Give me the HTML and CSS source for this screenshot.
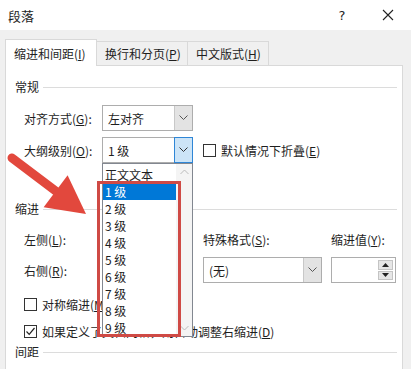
FILE: index.html
```html
<!DOCTYPE html>
<html lang="zh-CN">
<head>
  <meta charset="UTF-8">
  <title>段落</title>
  <link rel="stylesheet" href="styles.css">
</head>
<body>

  <div class="titlebar">
    <span class="title">段落</span>
    <span class="tb-btn">?</span>
    <span class="tb-btn close">
      <svg width="12" height="12" viewBox="0 0 12 12"><path d="M1 1 L11 11 M11 1 L1 11" stroke="#222" stroke-width="1.1"/></svg>
    </span>
  </div>

  <div class="main">
    <div class="tabs">
      <div class="tab active">缩进和间距(<u>I</u>)</div>
      <div class="tab">换行和分页(<u>P</u>)</div>
      <div class="tab">中文版式(<u>H</u>)</div>
    </div>

    <div class="panel">
      <!-- 常规 -->
      <div class="heading">常规</div>
      <div class="row first">
        <span class="label">对齐方式(<u>G</u>):</span>
        <div class="combo w91">
          <span class="combo-text">左对齐</span>
          <span class="combo-btn"><svg width="9" height="6" viewBox="0 0 9 6"><path d="M0.5 0.5 L4.5 4.5 L8.5 0.5" fill="none" stroke="#555"/></svg></span>
        </div>
      </div>
      <div class="row">
        <span class="label">大纲级别(<u>O</u>):</span>
        <div class="combo w91">
          <span class="combo-text">1 级</span>
          <span class="combo-btn hot"><svg width="9" height="6" viewBox="0 0 9 6"><path d="M0.5 0.5 L4.5 4.5 L8.5 0.5" fill="none" stroke="#333"/></svg></span>
        </div>
        <label class="check gap"><span class="box"></span>默认情况下折叠(<u>E</u>)</label>
      </div>

      <!-- 缩进 -->
      <div class="heading indent-head">缩进</div>
      <div class="indent-grid">
        <span class="label">左侧(<u>L</u>):</span>
        <span></span>
        <span class="label">特殊格式(<u>S</u>):</span>
        <span class="label">缩进值(<u>Y</u>):</span>

        <span class="label">右侧(<u>R</u>):</span>
        <span></span>
        <div class="combo w119">
          <span class="combo-text">(无)</span>
          <span class="combo-btn"><svg width="9" height="6" viewBox="0 0 9 6"><path d="M0.5 0.5 L4.5 4.5 L8.5 0.5" fill="none" stroke="#555"/></svg></span>
        </div>
        <div class="spin">
          <span class="spin-text"></span>
          <span class="spin-btns">
            <span class="spin-up"><svg width="7" height="4" viewBox="0 0 7 4"><path d="M0 4 L3.5 0 L7 4 Z" fill="#222"/></svg></span>
            <span class="spin-down"><svg width="7" height="4" viewBox="0 0 7 4"><path d="M0 0 L3.5 4 L7 0 Z" fill="#222"/></svg></span>
          </span>
        </div>
      </div>

      <label class="check row-check first-check"><span class="box"></span>对称缩进(<u>M</u>)</label>
      <label class="check row-check"><span class="box checked"><svg width="11" height="11" viewBox="0 0 11 11"><path d="M1.5 5.5 L4.2 8.3 L9.5 2" fill="none" stroke="#222" stroke-width="1.2"/></svg></span>如果定义了文档网格，则自动调整右缩进(<u>D</u>)</label>

      <!-- 间距 -->
      <div class="heading spacing-head">间距</div>
    </div>
  </div>

  <!-- open dropdown list -->
  <div class="droplist">
    <div class="items">
      <div class="item">正文文本</div>
      <div class="item selected">1 级</div>
      <div class="item">2 级</div>
      <div class="item">3 级</div>
      <div class="item">4 级</div>
      <div class="item">5 级</div>
      <div class="item">6 级</div>
      <div class="item">7 级</div>
      <div class="item">8 级</div>
      <div class="item">9 级</div>
    </div>
    <div class="scrollbar">
      <svg width="9" height="6" viewBox="0 0 9 6"><path d="M0.5 5 L4.5 1 L8.5 5" fill="none" stroke="#bbb"/></svg>
      <svg width="9" height="6" viewBox="0 0 9 6"><path d="M0.5 1 L4.5 5 L8.5 1" fill="none" stroke="#bbb"/></svg>
    </div>
  </div>

  <!-- annotation -->
  <div class="red-box"></div>
  <svg class="arrow" width="110" height="90" viewBox="0 0 110 90">
    <line x1="12" y1="18" x2="57" y2="52" stroke="#e2483d" stroke-width="9" stroke-linecap="round"/>
    <polygon points="43.6,67.2 67.6,35.2 86,74" fill="#e2483d"/>
  </svg>

</body>
</html>
```

FILE: styles.css
```css
:root {
  --line: #dcdcdc;
  --border: #adadad;
  --text: #1e1e1e;
}

body {
  margin: 0;
  width: 411px;
  height: 369px;
  overflow: hidden;
  position: relative;
  font-family: "Noto Sans CJK SC", "Noto Sans", sans-serif;
  font-size: 12px;
  color: var(--text);
  background: #fff;
}

u {
  text-decoration: underline;
  text-underline-offset: 1px;
}

/* 标题栏 */
.titlebar {
  height: 30px;
  display: flex;
  align-items: center;
  background: #fff;
}

.title {
  padding-left: 8px;
  font-size: 13px;
  flex: 1;
}

.tb-btn {
  width: 46px;
  height: 30px;
  display: flex;
  justify-content: center;
  align-items: center;
  font-family: "DejaVu Sans", sans-serif;
  font-size: 13px;
}

/* 主体 */
.main {
  background: #f0f0f0;
  height: 339px;
  padding: 9px 8px 0 5px;
  box-sizing: border-box;
}

.tabs {
  display: flex;
  align-items: flex-end;
  height: 26px;
}

.tab {
  height: 24px;
  padding: 0 8px;
  width: 91px;
  box-sizing: border-box;
  display: flex;
  align-items: center;
  background: #f0f0f0;
  border: 1px solid #d9d9d9;
  border-bottom: none;
  border-left: none;
  white-space: nowrap;
}

.tab:nth-child(3) { width: 81px; }

.tab.active {
  height: 27px;
  width: 92px;
  margin-bottom: -1px;
  background: #fff;
  border-left: 1px solid #d9d9d9;
  position: relative;
  z-index: 1;
}

.panel {
  background: #fff;
  border: 1px solid #d9d9d9;
  height: 310px;
  padding: 13px 0 0 9px;
  box-sizing: border-box;
}

.heading {
  display: flex;
  align-items: center;
  height: 16px;
  line-height: 16px;
  margin-right: 5px;
}

.heading::after {
  content: "";
  flex: 1;
  border-top: 1px solid var(--line);
  margin-left: 4px;
}

.row {
  display: flex;
  align-items: center;
  height: 26px;
  margin-top: 6px;
  padding-left: 9px;
}

.row.first { margin-top: 10px; }

.label {
  width: 78px;
  flex: none;
  white-space: nowrap;
}

/* 下拉框 */
.combo {
  height: 26px;
  box-sizing: border-box;
  border: 1px solid var(--border);
  display: flex;
  background: #fff;
}

.w91 { width: 91px; }
.w119 { width: 119px; }

.combo-text {
  flex: 1;
  padding-left: 5px;
  display: flex;
  align-items: center;
  white-space: nowrap;
}

.combo-btn {
  width: 17px;
  background: #e3e3e3;
  border-left: 1px solid #c8c8c8;
  display: flex;
  justify-content: center;
  align-items: center;
}

.combo-btn.hot {
  background: #cce4f7;
  border: 1px solid #2f86d6;
  margin: -1px -1px -1px 0;
}

/* 复选框 */
.check {
  display: flex;
  align-items: center;
  white-space: nowrap;
}

.check.gap { margin-left: 10px; }

.box {
  width: 13px;
  height: 13px;
  box-sizing: border-box;
  border: 1px solid #333;
  background: #fff;
  margin-right: 5px;
  flex: none;
  display: flex;
  justify-content: center;
  align-items: center;
}

.row-check {
  height: 18px;
  padding-left: 9px;
  margin-top: 9px;
}

.row-check.first-check { margin-top: 12px; }

/* 缩进 */
.indent-head { margin-top: 38px; }

.indent-grid {
  display: grid;
  grid-template-columns: 78px 101px 128px 65px;
  grid-template-rows: 22px 26px;
  row-gap: 7px;
  align-items: center;
  margin-top: 11px;
  padding-left: 9px;
}

.spin {
  height: 26px;
  box-sizing: border-box;
  border: 1px solid var(--border);
  display: flex;
}

.spin-text { flex: 1; }

.spin-btns {
  width: 15px;
  margin: 2px 2px 2px 0;
  display: flex;
  flex-direction: column;
  gap: 1px;
}

.spin-up, .spin-down {
  flex: 1;
  background: #e6e6e6;
  border: 1px solid #c4c4c4;
  display: flex;
  justify-content: center;
  align-items: center;
}

.spacing-head { margin-top: 4px; }

/* 展开的列表 */
.droplist {
  position: absolute;
  left: 102px;
  top: 163px;
  width: 91px;
  height: 174px;
  box-sizing: border-box;
  border: 1px solid #828790;
  background: #fff;
  display: flex;
  z-index: 2;
}

.items {
  flex: 1;
  padding-top: 2px;
}

.item {
  height: 17px;
  line-height: 17px;
  padding-left: 2px;
  white-space: nowrap;
}

.item.selected {
  background: #0078d7;
  color: #fff;
}

.scrollbar {
  width: 16px;
  background: #f4f4f4;
  display: flex;
  flex-direction: column;
  justify-content: space-between;
  align-items: center;
  padding: 5px 0;
}

/* 标注 */
.red-box {
  position: absolute;
  left: 97px;
  top: 181px;
  width: 84px;
  height: 156px;
  box-sizing: border-box;
  border: 3px solid #cf4a45;
  z-index: 3;
}

.arrow {
  position: absolute;
  left: 0;
  top: 140px;
  z-index: 3;
}
```
